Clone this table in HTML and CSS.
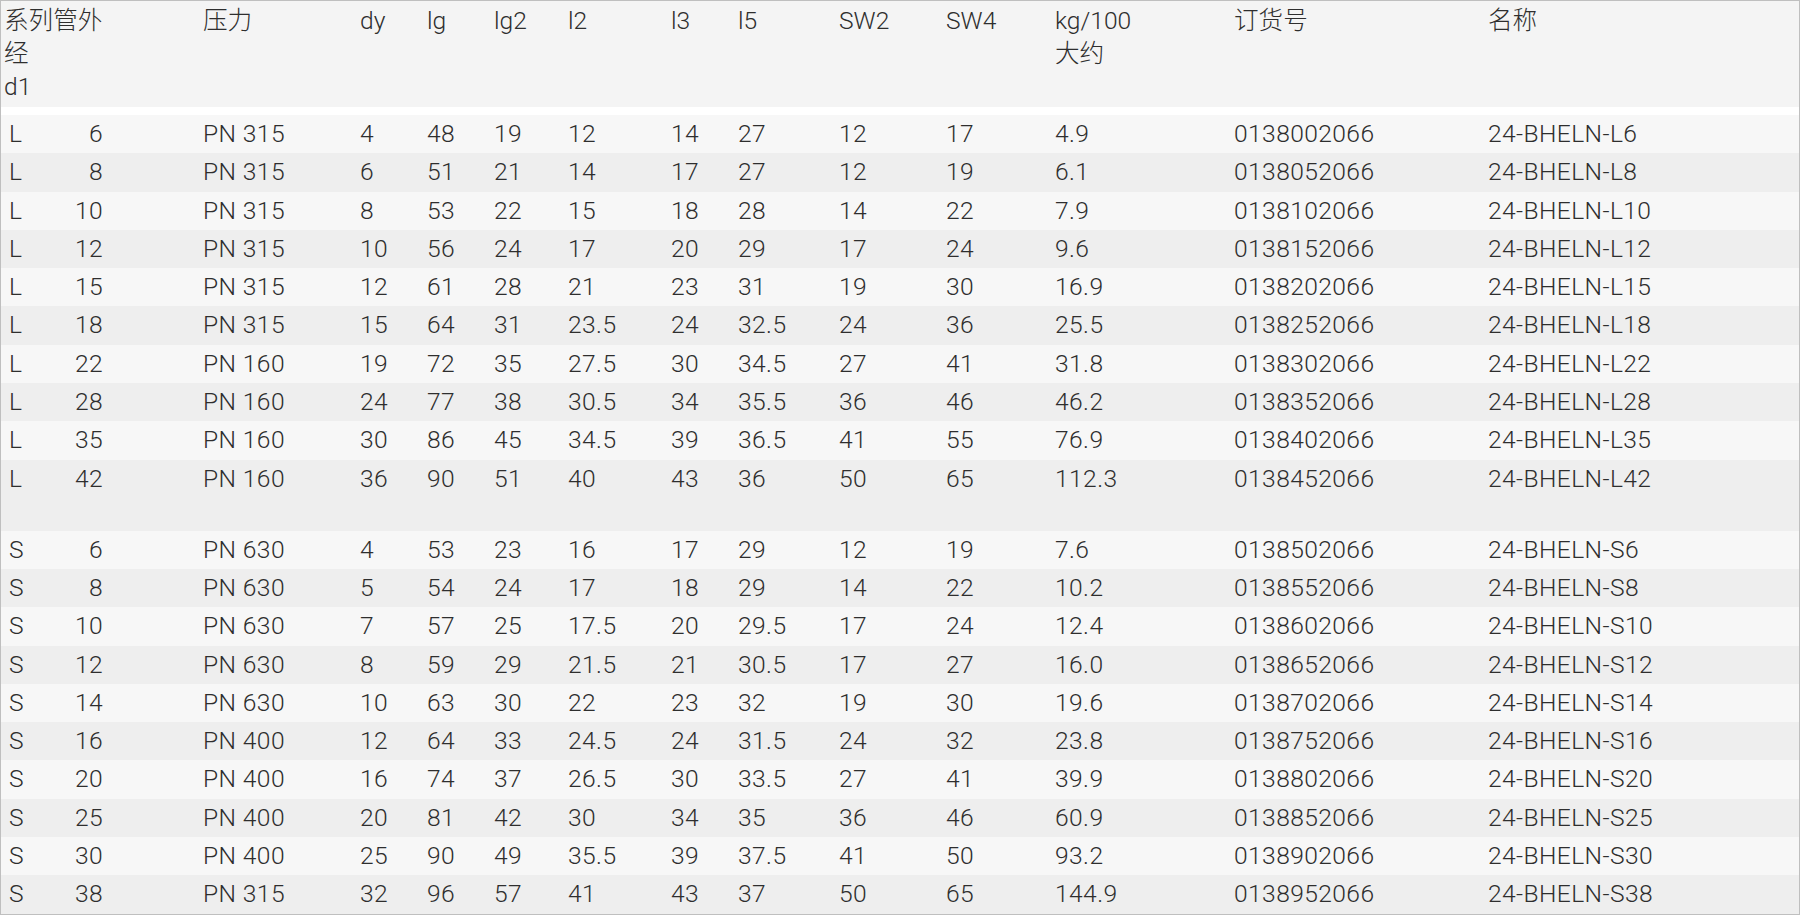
FILE: index.html
```html
<!DOCTYPE html>
<html lang="zh">
<head>
<meta charset="utf-8">
<title>24-BHELN</title>
<link rel="stylesheet" href="styles.css">
</head>
<body>
<div class="frame">
<table class="spec">
<colgroup>
<col class="c-ser"><col class="c-d1"><col class="c-gap"><col class="c-pn"><col class="c-dy"><col class="c-lg"><col class="c-lg2"><col class="c-l2"><col class="c-l3"><col class="c-l5"><col class="c-sw2"><col class="c-sw4"><col class="c-kg"><col class="c-no"><col class="c-name">
</colgroup>
<thead>
<tr>
<th colspan="2" class="first">系列管外<br>经<br>d1</th>
<th></th>
<th>压力</th>
<th>dy</th>
<th>lg</th>
<th>lg2</th>
<th>l2</th>
<th>l3</th>
<th>l5</th>
<th>SW2</th>
<th>SW4</th>
<th>kg/100<br>大约</th>
<th>订货号</th>
<th>名称</th>
</tr>
</thead>
<tbody>
<tr><td class="ser">L</td><td class="d1">6</td><td></td><td>PN 315</td><td>4</td><td>48</td><td>19</td><td>12</td><td>14</td><td>27</td><td>12</td><td>17</td><td>4.9</td><td>0138002066</td><td>24-BHELN-L6</td></tr>
<tr><td class="ser">L</td><td class="d1">8</td><td></td><td>PN 315</td><td>6</td><td>51</td><td>21</td><td>14</td><td>17</td><td>27</td><td>12</td><td>19</td><td>6.1</td><td>0138052066</td><td>24-BHELN-L8</td></tr>
<tr><td class="ser">L</td><td class="d1">10</td><td></td><td>PN 315</td><td>8</td><td>53</td><td>22</td><td>15</td><td>18</td><td>28</td><td>14</td><td>22</td><td>7.9</td><td>0138102066</td><td>24-BHELN-L10</td></tr>
<tr><td class="ser">L</td><td class="d1">12</td><td></td><td>PN 315</td><td>10</td><td>56</td><td>24</td><td>17</td><td>20</td><td>29</td><td>17</td><td>24</td><td>9.6</td><td>0138152066</td><td>24-BHELN-L12</td></tr>
<tr><td class="ser">L</td><td class="d1">15</td><td></td><td>PN 315</td><td>12</td><td>61</td><td>28</td><td>21</td><td>23</td><td>31</td><td>19</td><td>30</td><td>16.9</td><td>0138202066</td><td>24-BHELN-L15</td></tr>
<tr><td class="ser">L</td><td class="d1">18</td><td></td><td>PN 315</td><td>15</td><td>64</td><td>31</td><td>23.5</td><td>24</td><td>32.5</td><td>24</td><td>36</td><td>25.5</td><td>0138252066</td><td>24-BHELN-L18</td></tr>
<tr><td class="ser">L</td><td class="d1">22</td><td></td><td>PN 160</td><td>19</td><td>72</td><td>35</td><td>27.5</td><td>30</td><td>34.5</td><td>27</td><td>41</td><td>31.8</td><td>0138302066</td><td>24-BHELN-L22</td></tr>
<tr><td class="ser">L</td><td class="d1">28</td><td></td><td>PN 160</td><td>24</td><td>77</td><td>38</td><td>30.5</td><td>34</td><td>35.5</td><td>36</td><td>46</td><td>46.2</td><td>0138352066</td><td>24-BHELN-L28</td></tr>
<tr><td class="ser">L</td><td class="d1">35</td><td></td><td>PN 160</td><td>30</td><td>86</td><td>45</td><td>34.5</td><td>39</td><td>36.5</td><td>41</td><td>55</td><td>76.9</td><td>0138402066</td><td>24-BHELN-L35</td></tr>
<tr class="group-end"><td class="ser">L</td><td class="d1">42</td><td></td><td>PN 160</td><td>36</td><td>90</td><td>51</td><td>40</td><td>43</td><td>36</td><td>50</td><td>65</td><td>112.3</td><td>0138452066</td><td>24-BHELN-L42</td></tr>
<tr><td class="ser">S</td><td class="d1">6</td><td></td><td>PN 630</td><td>4</td><td>53</td><td>23</td><td>16</td><td>17</td><td>29</td><td>12</td><td>19</td><td>7.6</td><td>0138502066</td><td>24-BHELN-S6</td></tr>
<tr><td class="ser">S</td><td class="d1">8</td><td></td><td>PN 630</td><td>5</td><td>54</td><td>24</td><td>17</td><td>18</td><td>29</td><td>14</td><td>22</td><td>10.2</td><td>0138552066</td><td>24-BHELN-S8</td></tr>
<tr><td class="ser">S</td><td class="d1">10</td><td></td><td>PN 630</td><td>7</td><td>57</td><td>25</td><td>17.5</td><td>20</td><td>29.5</td><td>17</td><td>24</td><td>12.4</td><td>0138602066</td><td>24-BHELN-S10</td></tr>
<tr><td class="ser">S</td><td class="d1">12</td><td></td><td>PN 630</td><td>8</td><td>59</td><td>29</td><td>21.5</td><td>21</td><td>30.5</td><td>17</td><td>27</td><td>16.0</td><td>0138652066</td><td>24-BHELN-S12</td></tr>
<tr><td class="ser">S</td><td class="d1">14</td><td></td><td>PN 630</td><td>10</td><td>63</td><td>30</td><td>22</td><td>23</td><td>32</td><td>19</td><td>30</td><td>19.6</td><td>0138702066</td><td>24-BHELN-S14</td></tr>
<tr><td class="ser">S</td><td class="d1">16</td><td></td><td>PN 400</td><td>12</td><td>64</td><td>33</td><td>24.5</td><td>24</td><td>31.5</td><td>24</td><td>32</td><td>23.8</td><td>0138752066</td><td>24-BHELN-S16</td></tr>
<tr><td class="ser">S</td><td class="d1">20</td><td></td><td>PN 400</td><td>16</td><td>74</td><td>37</td><td>26.5</td><td>30</td><td>33.5</td><td>27</td><td>41</td><td>39.9</td><td>0138802066</td><td>24-BHELN-S20</td></tr>
<tr><td class="ser">S</td><td class="d1">25</td><td></td><td>PN 400</td><td>20</td><td>81</td><td>42</td><td>30</td><td>34</td><td>35</td><td>36</td><td>46</td><td>60.9</td><td>0138852066</td><td>24-BHELN-S25</td></tr>
<tr><td class="ser">S</td><td class="d1">30</td><td></td><td>PN 400</td><td>25</td><td>90</td><td>49</td><td>35.5</td><td>39</td><td>37.5</td><td>41</td><td>50</td><td>93.2</td><td>0138902066</td><td>24-BHELN-S30</td></tr>
<tr><td class="ser">S</td><td class="d1">38</td><td></td><td>PN 315</td><td>32</td><td>96</td><td>57</td><td>41</td><td>43</td><td>37</td><td>50</td><td>65</td><td>144.9</td><td>0138952066</td><td>24-BHELN-S38</td></tr>
</tbody>
</table>
</div>
</body>
</html>
```

FILE: styles.css
```css
html, body {
  margin: 0;
  padding: 0;
  background: #ffffff;
}

.frame {
  width: 1798px;
  border: 1px solid #bfbfbf;
  background: #ffffff;
}

.spec {
  width: 1798px;
  table-layout: fixed;
  border-collapse: collapse;
  border-spacing: 0;
  font-family: "Roboto", "Noto Sans CJK SC", sans-serif;
  font-weight: 300;
  font-size: 24.6px;
  letter-spacing: 0.4px;
  color: #2e2e2e;
}

.c-ser { width: 54px; }
.c-d1 { width: 52px; }
.c-gap { width: 96px; }
.c-pn { width: 157px; }
.c-dy { width: 67px; }
.c-lg { width: 67px; }
.c-lg2 { width: 74px; }
.c-l2 { width: 103px; }
.c-l3 { width: 67px; }
.c-l5 { width: 101px; }
.c-sw2 { width: 107px; }
.c-sw4 { width: 109px; }
.c-kg { width: 179px; }
.c-no { width: 254px; }
.c-name { width: 311px; }

.spec th {
  font-weight: 300;
  text-align: left;
  vertical-align: top;
  line-height: 33px;
  padding: 3px 0 4px 0;
  background: #f4f4f4;
  border-bottom: 8px solid #ffffff;
  white-space: nowrap;
  letter-spacing: 0;
}

.spec th.first {
  padding-left: 3px;
}

.spec td {
  padding: 0;
  height: 38.3px;
  line-height: 38.3px;
  vertical-align: top;
  white-space: nowrap;
}

.spec tbody tr:nth-child(odd) td { background: #f7f7f7; }
.spec tbody tr:nth-child(even) td { background: #eeeeee; }

.spec td.ser { padding-left: 8px; }
.spec td.d1 { text-align: right; padding-right: 4px; }

.spec tr.group-end td {
  height: 71px;
}
```
